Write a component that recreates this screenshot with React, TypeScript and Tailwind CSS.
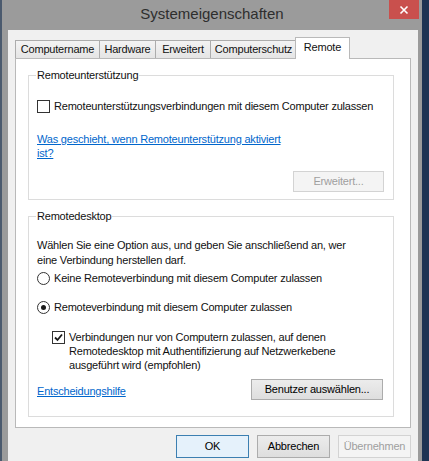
import React from "react"

const font = { fontFamily: '"Liberation Sans", Arial, sans-serif' }

const Tab = ({ label, w, active }: { label: string; w: string; active?: boolean }) => (
  <div
    className={`${w} -ml-px first:ml-0 flex items-center justify-center border border-b-0 ${
      active
        ? "h-[22px] bg-white border-[#b9b9b9] relative z-10 -mb-px pb-[2px]"
        : "h-[18px] bg-gradient-to-b from-[#f3f3f3] to-[#e5e5e5] border-[#acacac]"
    }`}
  >
    {label}
  </div>
)

const CheckBox = ({ checked }: { checked?: boolean }) => (
  <div className="w-[13px] h-[13px] shrink-0 border border-[#333] bg-white flex items-center justify-center">
    {checked && (
      <svg width="9" height="9" viewBox="0 0 9 9">
        <path d="M1 4.5 L3.5 7 L8 1.5" fill="none" stroke="#1a1a1a" strokeWidth="1.8" />
      </svg>
    )}
  </div>
)

const Radio = ({ checked }: { checked?: boolean }) => (
  <div className="w-[13px] h-[13px] shrink-0 rounded-full border border-[#333] bg-white flex items-center justify-center">
    {checked && <div className="w-[5px] h-[5px] rounded-full bg-[#1a1a1a]" />}
  </div>
)

const Button = ({
  label,
  w,
  h,
  disabled,
  focused,
}: {
  label: string
  w: string
  h: string
  disabled?: boolean
  focused?: boolean
}) => (
  <div
    className={`${w} ${h} flex items-center justify-center border ${
      disabled
        ? "bg-[#f4f4f4] border-[#d3d3d3] text-[#9f9f9f]"
        : focused
          ? "bg-[#e5f1fb] border-[#3c7fb1] text-black"
          : "bg-gradient-to-b from-[#ececec] to-[#dedede] border-[#acacac] text-black"
    }`}
  >
    {label}
  </div>
)

export default function App() {
  return (
    <div
      className="w-[429px] h-[461px] flex bg-[#2b3e58] text-[11px] text-[#111] tracking-[-0.2px] overflow-hidden"
      style={font}
    >
      <div className="w-[2px] bg-[#4b5a6e]" />
      <div className="w-[420px] bg-[#9b9b9b] flex flex-col">
        {/* title bar */}
        <div className="h-[30px] relative flex items-center justify-center">
          <span className="text-[15px] text-[#2e2e2e] tracking-normal -mt-[2px]">Systemeigenschaften</span>
          <div className="absolute right-[3px] top-0 w-[30px] h-[19px] bg-[#c9504d] flex items-center justify-center">
            <svg width="10" height="10" viewBox="0 0 10 10">
              <path d="M1.5 1.5 L8.5 8.5 M8.5 1.5 L1.5 8.5" stroke="white" strokeWidth="1.6" />
            </svg>
          </div>
        </div>

        {/* client */}
        <div className="ml-[6px] w-[410px] flex-1 bg-[#f0f0f0] flex flex-col pt-[6px]">
          <div className="flex items-end pl-[7px] h-[22px]">
            <Tab label="Computername" w="w-[85px]" />
            <Tab label="Hardware" w="w-[57px]" />
            <Tab label="Erweitert" w="w-[56px]" />
            <Tab label="Computerschutz" w="w-[87px]" />
            <div className="-ml-[2px]">
              <Tab label="Remote" w="w-[55px]" active />
            </div>
          </div>

          <div className="mx-[7px] h-[370px] bg-white border border-[#b9b9b9] pt-[9px] pl-[12px] pr-[16px]">
            <fieldset className="border border-[#dcdcdc] px-[8px] pb-[7px]">
              <legend className="ml-[-1px] px-[1px] leading-[15px]">Remoteunterstützung</legend>
              <div className="mt-[16px] flex items-center gap-[4px] leading-[15px]">
                <CheckBox />
                <span>Remoteunterstützungsverbindungen mit diesem Computer zulassen</span>
              </div>
              <div className="mt-[18px] leading-[14px] text-[#0066cc] underline w-[250px]">
                Was geschieht, wenn Remoteunterstützung aktiviert ist?
              </div>
              <div className="mt-[11px] flex justify-end pr-[1px]">
                <Button label="Erweitert..." w="w-[91px]" h="h-[21px]" disabled />
              </div>
            </fieldset>

            <fieldset className="mt-[9px] border border-[#dcdcdc] px-[8px] pb-[16px]">
              <legend className="ml-[-1px] px-[1px] leading-[15px]">Remotedesktop</legend>
              <p className="mt-[14px] leading-[15px] w-[320px]">
                Wählen Sie eine Option aus, und geben Sie anschließend an, wer eine Verbindung herstellen darf.
              </p>
              <div className="mt-[3px] flex items-center gap-[4px] leading-[15px]">
                <Radio />
                <span>Keine Remoteverbindung mit diesem Computer zulassen</span>
              </div>
              <div className="mt-[14px] flex items-center gap-[4px] leading-[15px]">
                <Radio checked />
                <span>Remoteverbindung mit diesem Computer zulassen</span>
              </div>
              <div className="mt-[15px] ml-[15px] flex items-start gap-[4px] leading-[14px]">
                <div className="mt-[1px]">
                  <CheckBox checked />
                </div>
                <span className="w-[270px]">
                  Verbindungen nur von Computern zulassen, auf denen Remotedesktop mit Authentifizierung auf
                  Netzwerkebene ausgeführt wird (empfohlen)
                </span>
              </div>
              <div className="mt-[7px] flex items-center justify-between pr-[2px]">
                <span className="text-[#0066cc] underline mt-[3px]">Entscheidungshilfe</span>
                <Button label="Benutzer auswählen..." w="w-[132px]" h="h-[21px]" />
              </div>
            </fieldset>
          </div>

          <div className="mt-[7px] flex justify-end gap-[8px] pr-[7px]">
            <Button label="OK" w="w-[73px]" h="h-[23px]" focused />
            <Button label="Abbrechen" w="w-[73px]" h="h-[23px]" />
            <Button label="Übernehmen" w="w-[73px]" h="h-[23px]" disabled />
          </div>
        </div>
      </div>
      <div className="flex-1 bg-[#1f3454]" />
    </div>
  )
}
